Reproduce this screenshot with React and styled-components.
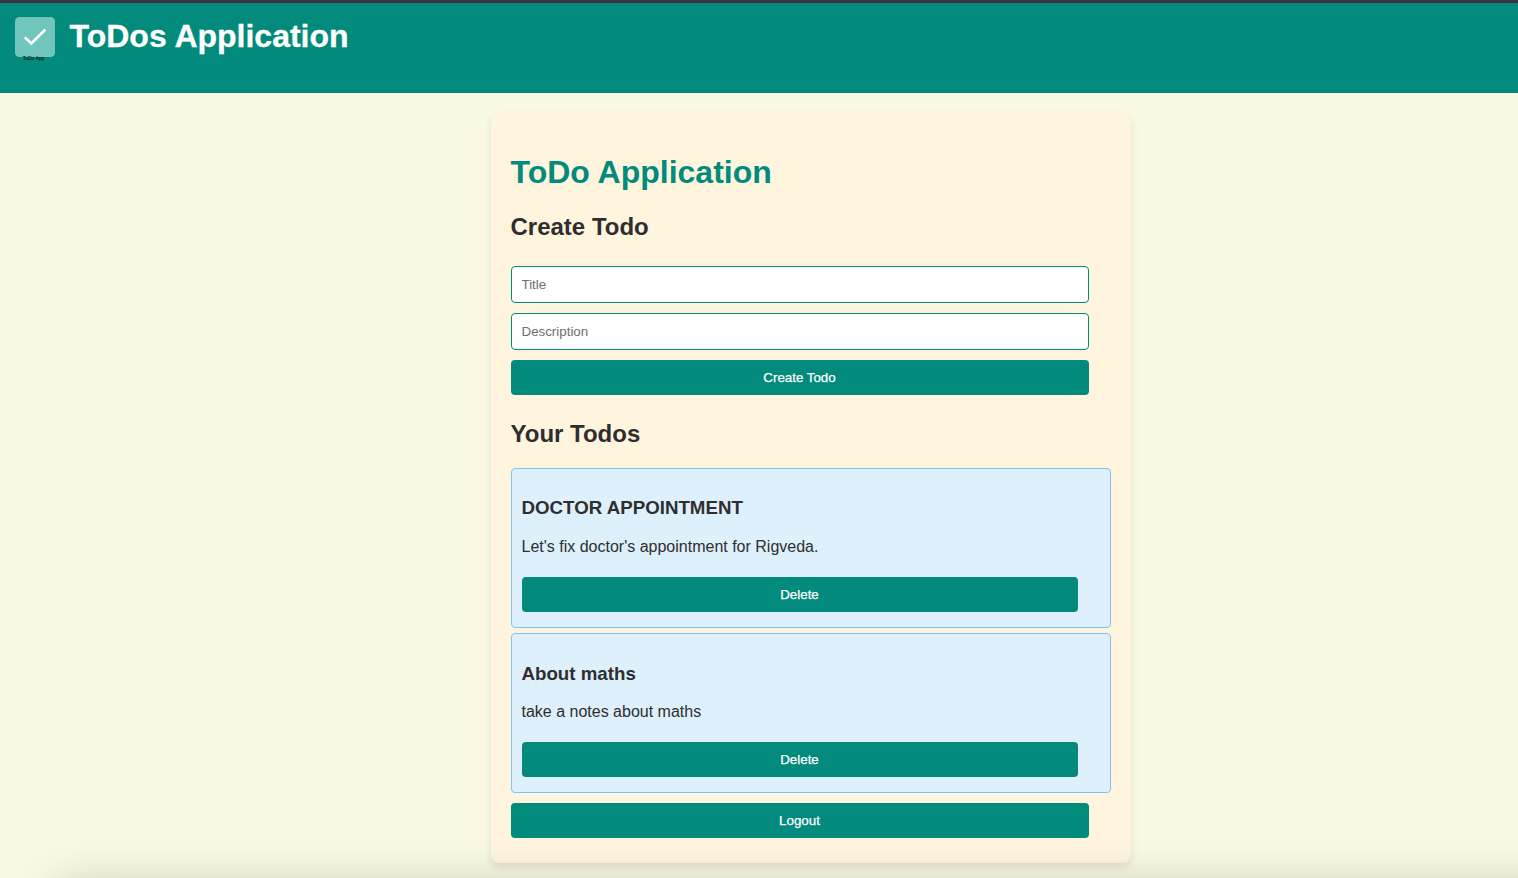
import React from "react";
import styled, { createGlobalStyle } from "styled-components";

const TEAL = "#028b7c";
const INK = "#2e2e2e";

const GlobalStyle = createGlobalStyle`
  html { background: #f8fae3; overflow: hidden; }
  body {
    margin: 0;
    font-family: "Liberation Sans", Arial, sans-serif;
    color: ${INK};
  }
`;

const Page = styled.div`
  display: flex;
  flex-direction: column;
  min-height: 878px;
  box-sizing: border-box;
`;

const Header = styled.header`
  display: flex;
  align-items: flex-start;
  gap: 15px;
  height: 93px;
  box-sizing: border-box;
  padding: 14px 15px 0;
  border-top: 3px solid #3b3442;
  background: ${TEAL};
`;

const Logo = styled.svg`
  flex: none;
  width: 40px;
  height: 46px;
`;

const Brand = styled.h1`
  margin: 0 0 0 -0.5px;
  font-size: 32px;
  line-height: 38px;
  color: #fff;
  -webkit-text-stroke: 0.3px #fff;
`;

const Card = styled.main`
  display: flow-root;
  width: 600px;
  margin: 20px 0 0 491px;
  padding: 20px;
  height: 710px;
  border-radius: 8px;
  background: #fff5de;
  box-shadow: 0 4px 8px rgba(0, 0, 0, 0.1);
`;

const Title = styled.h1`
  margin: 21px 0 22px -0.5px;
  font-size: 32px;
  line-height: 37px;
  color: ${TEAL};
`;

const SectionTitle = styled.h2`
  margin: 20px 0 20px -0.5px;
  font-size: 24px;
  line-height: 28px;
`;

const Form = styled.form`
  display: flex;
  flex-direction: column;
  gap: 10px;
  margin: 25px 22px 25px 0;
`;

const Field = styled.input`
  box-sizing: border-box;
  height: 37px;
  padding: 10px 10px 10px 9.5px;
  border: 1px solid ${TEAL};
  border-radius: 4px;
  background: #fff;
  font: 13.333px "Liberation Sans", Arial, sans-serif;
  &::placeholder { color: #6e6e6e; }
`;

const Button = styled.button`
  display: block;
  width: ${(p) => (p.$fill ? "100%" : "calc(100% - 22px)")};
  height: 35px;
  padding: 10px 10px 10px 9px;
  border: 0;
  border-radius: 4px;
  background: ${TEAL};
  color: #fff;
  font: 13.333px/15px "Liberation Sans", Arial, sans-serif;
  -webkit-text-stroke: 0.25px #fff;
`;

const List = styled.ul`
  display: flex;
  flex-direction: column;
  gap: 5px;
  margin: 0 0 10px;
  padding: 0;
  list-style: none;
`;

const Item = styled.li`
  box-sizing: border-box;
  height: 160.2px;
  padding: 10px;
  border: 1px solid #7fc4f4;
  border-radius: 4px;
  background: #def0fc;
`;

const ItemTitle = styled.h3`
  margin: 18.4px 0 18.6px -0.5px;
  font-size: 18.72px;
  line-height: 21px;
`;

const ItemText = styled.p`
  margin: 0 0 21px -0.5px;
  font-size: 16px;
  line-height: 19px;
`;

const BottomShade = styled.div`
  position: fixed;
  top: calc(100% + 10px);
  left: 55px;
  right: -80px;
  height: 100px;
  box-shadow: 0 0 50px rgba(0, 0, 0, 0.22);
  pointer-events: none;
`;

const todos = [
  { title: "DOCTOR APPOINTMENT", text: "Let's fix doctor's appointment for Rigveda." },
  { title: "About maths", text: "take a notes about maths" },
];

export default function App() {
  return (
    <Page>
      <GlobalStyle />
      <Header>
        <Logo viewBox="0 0 40 46">
          <rect width="40" height="40" rx="4.5" fill="#70c5bd" />
          <path d="M9.8 20.2 L16.3 26.4 L30.4 12.4" fill="none" stroke="#fff" strokeWidth="2.8" />
          <text x="18.5" y="43" fontSize="5" textAnchor="middle" fill="#000">ToDo App</text>
        </Logo>
        <Brand>ToDos Application</Brand>
      </Header>
      <Card>
        <Title>ToDo Application</Title>
        <SectionTitle>Create Todo</SectionTitle>
        <Form onSubmit={(e) => e.preventDefault()}>
          <Field placeholder="Title" />
          <Field placeholder="Description" />
          <Button $fill>Create Todo</Button>
        </Form>
        <SectionTitle>Your Todos</SectionTitle>
        <List>
          {todos.map((t) => (
            <Item key={t.title}>
              <ItemTitle>{t.title}</ItemTitle>
              <ItemText>{t.text}</ItemText>
              <Button>Delete</Button>
            </Item>
          ))}
        </List>
        <Button>Logout</Button>
      </Card>
      <BottomShade />
    </Page>
  );
}
